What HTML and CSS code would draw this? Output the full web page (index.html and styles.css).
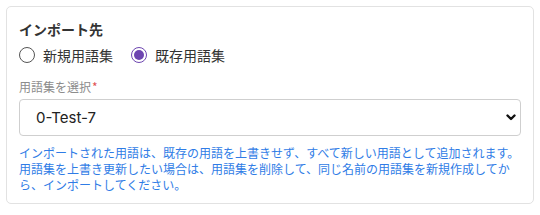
FILE: index.html
```html
<!DOCTYPE html>
<html lang="ja">
<head>
    <meta charset="UTF-8">
    <title>インポート先</title>
    <link rel="stylesheet" href="styles.css">
</head>
<body>
    <div class="card">
        <h3 class="title">インポート先</h3>

        <!-- 新規 / 既存 -->
        <div class="radio-row">
            <label class="radio">
                <input type="radio" name="target" value="new">
                <span>新規用語集</span>
            </label>
            <label class="radio">
                <input type="radio" name="target" value="existing" checked>
                <span>既存用語集</span>
            </label>
        </div>

        <label class="field-label" for="glossary">用語集を選択<span class="req">*</span></label>
        <div class="select-wrap">
            <select id="glossary" class="select">
                <option>0-Test-7</option>
            </select>
            <svg class="chevron" width="10" height="7" viewBox="0 0 10 7">
                <path d="M1.5 1.5 L5 5 L8.5 1.5" fill="none" stroke="#111" stroke-width="2.4" stroke-linecap="round" stroke-linejoin="round"/>
            </svg>
        </div>

        <p class="help">インポートされた用語は、既存の用語を上書きせず、すべて新しい用語として追加されます。用語集を上書き更新したい場合は、用語集を削除して、同じ名前の用語集を新規作成してから、インポートしてください。</p>
    </div>
</body>
</html>
```

FILE: styles.css
```css
* {
    margin: 0;
    padding: 0;
    box-sizing: border-box;
}

body {
    font-family: "Inter", "Noto Sans CJK JP", sans-serif;
    background: #fff;
    color: #333;
    padding: 6px;
}

.card {
    width: 528px;
    height: 198px;
    border: 1px solid #e2e2e2;
    border-radius: 5px;
    padding: 12px 12px 10px 12px;
}

.title {
    font-size: 14px;
    font-weight: 700;
    line-height: 20px;
    color: #333;
    font-family: "Noto Sans CJK JP", sans-serif;
}

.radio-row {
    display: flex;
    gap: 18px;
    margin-top: 6px;
    height: 20px;
    align-items: center;
}

.radio {
    display: flex;
    align-items: center;
    gap: 8px;
    font-size: 14px;
    color: #333;
    font-family: "Noto Sans CJK JP", sans-serif;
}

.radio input {
    appearance: none;
    width: 16px;
    height: 16px;
    border: 1px solid #555;
    border-radius: 50%;
    margin: 0;
    display: grid;
    place-items: center;
}

.radio input:checked {
    border-color: #6d45b0;
}

.radio input:checked::after {
    content: "";
    width: 10px;
    height: 10px;
    border-radius: 50%;
    background: #6d45b0;
}

.field-label {
    display: block;
    margin-top: 14px;
    font-size: 12px;
    line-height: 16px;
    color: #8c8c8c;
    font-family: "Noto Sans CJK JP", sans-serif;
}

.req {
    color: #e05252;
    margin-left: 1px;
}

.select-wrap {
    position: relative;
    margin-top: 4px;
}

.select {
    appearance: none;
    width: 100%;
    height: 37px;
    border: 1px solid #cfcfcf;
    border-radius: 4px;
    background: #fff;
    padding: 0 16px;
    font-family: "Inter", sans-serif;
    font-size: 15px;
    color: #222;
    outline: none;
}

.chevron {
    position: absolute;
    right: 5px;
    top: 15px;
    pointer-events: none;
}

.help {
    margin-top: 9px;
    font-size: 12px;
    line-height: 16px;
    color: #2f7ce6;
    font-family: "Noto Sans CJK JP", sans-serif;
}
```
